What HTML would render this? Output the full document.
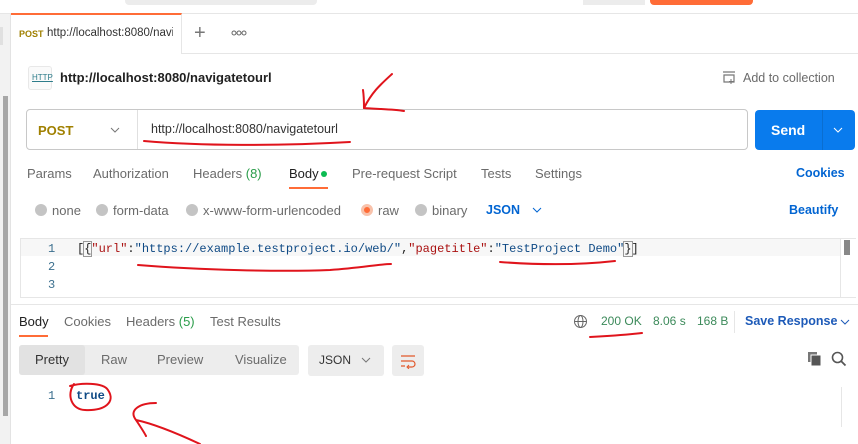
<!DOCTYPE html>
<html><head><style>
*{margin:0;padding:0;box-sizing:border-box}
body{width:858px;height:444px;overflow:hidden;background:#fff;font-family:"Liberation Sans",sans-serif;position:relative;color:#212121}
.a{position:absolute;white-space:nowrap}
.mono{font-family:"Liberation Mono",monospace;font-size:12px}
.g{color:#6b6b6b;font-size:13px}
.blue{color:#0265d2}
</style></head><body>
<div class="a" style="left:125px;top:0;width:192px;height:5px;background:#ececec;border-radius:0 0 4px 4px"></div>
<div class="a" style="left:583px;top:0;width:62px;height:5px;background:#ececec"></div>
<div class="a" style="left:650px;top:0;width:103px;height:5px;background:#ff6c37;border-radius:0 0 4px 4px"></div>
<div class="a" style="left:0;top:13px;width:858px;height:1px;background:#e6e6e6"></div>
<div class="a" style="left:0;top:53px;width:858px;height:1px;background:#e6e6e6"></div>
<div class="a" style="left:0;top:14px;width:11px;height:430px;background:#f2f2f2;border-right:1px solid #e3e3e3"></div>
<div class="a" style="left:0;top:27px;width:3px;height:18px;background:#e0e0e0"></div>
<div class="a" style="left:3px;top:96px;width:5px;height:320px;background:#a7a7a7"></div>
<div class="a" style="left:11px;top:13px;width:171px;height:41px;background:#fff;border-top:2px solid #ff6c37;border-right:1px solid #e6e6e6"></div>
<div class="a" style="left:19px;top:29px;font-size:9px;color:#a08000;font-weight:bold">POST</div>
<div class="a" style="left:47px;top:27px;font-size:11.5px;color:#333;width:126px;overflow:hidden">http://localhost:8080/navigatetourl</div>
<div class="a" style="left:194px;top:22px;font-size:20px;color:#777;font-weight:300">+</div>
<svg class="a" style="left:231px;top:30px" width="16" height="6"><circle cx="3" cy="3" r="2" fill="none" stroke="#666"/><circle cx="8" cy="3" r="2" fill="none" stroke="#666"/><circle cx="13" cy="3" r="2" fill="none" stroke="#666"/></svg>
<div class="a" style="left:28px;top:66px;width:24px;height:24px;border:1px solid #e8e8e8;border-radius:3px;background:#fafafa"></div>
<div class="a" style="left:32px;top:73px;font-size:8px;color:#2d7c8a;text-decoration:underline">HTTP</div>
<div class="a" style="left:60px;top:70px;font-size:13px;font-weight:bold;color:#212121">http://localhost:8080/navigatetourl</div>
<svg class="a" style="left:721px;top:70px" width="16" height="16"><path d="M2 2h12M3 5h10v7h-10z" fill="none" stroke="#777" stroke-width="1.2"/><path d="M10 9v5M8 11.5h5" stroke="#777"/></svg>
<div class="a" style="left:743px;top:71px;font-size:12.5px;color:#6b6b6b">Add to collection</div>
<div class="a" style="left:26px;top:109px;width:722px;height:41px;border:1px solid #c8c8c8;border-radius:4px"></div>
<div class="a" style="left:137px;top:110px;width:1px;height:39px;background:#e0e0e0"></div>
<div class="a" style="left:38px;top:123px;font-size:13px;font-weight:bold;color:#a08000">POST</div>
<svg class="a" style="left:110px;top:126px" width="10" height="8"><path d="M1 2l4 4 4-4" fill="none" stroke="#777"/></svg>
<div class="a" style="left:151px;top:122px;font-size:12.5px;color:#333">http://localhost:8080/navigatetourl</div>
<div class="a" style="left:755px;top:110px;width:100px;height:40px;background:#097bed;border-radius:4px"></div>
<div class="a" style="left:822px;top:110px;width:1px;height:40px;background:#0a6ed0"></div>
<div class="a" style="left:771px;top:122px;font-size:14px;font-weight:bold;color:#fff">Send</div>
<svg class="a" style="left:833px;top:126px" width="10" height="8"><path d="M1 2l4 4 4-4" fill="none" stroke="#fff"/></svg>
<div class="a g" style="left:27px;top:166px">Params</div>
<div class="a g" style="left:93px;top:166px">Authorization</div>
<div class="a g" style="left:193px;top:166px">Headers <span style="color:#2a9d4a">(8)</span></div>
<div class="a" style="left:289px;top:166px;font-size:13px;color:#212121">Body</div>
<div class="a" style="left:321px;top:171px;width:6px;height:6px;border-radius:50%;background:#0cbb52"></div>
<div class="a" style="left:289px;top:187px;width:39px;height:2px;background:#ff6c37"></div>
<div class="a g" style="left:352px;top:166px">Pre-request Script</div>
<div class="a g" style="left:481px;top:166px">Tests</div>
<div class="a g" style="left:535px;top:166px">Settings</div>
<div class="a blue" style="left:796px;top:166px;font-size:12.5px;font-weight:bold">Cookies</div>
<div class="a" style="left:35px;top:204px;width:12px;height:12px;border-radius:50%;background:#c4c4c4"></div>
<div class="a g" style="left:52px;top:203px">none</div>
<div class="a" style="left:96px;top:204px;width:12px;height:12px;border-radius:50%;background:#c4c4c4"></div>
<div class="a g" style="left:113px;top:203px">form-data</div>
<div class="a" style="left:186px;top:204px;width:12px;height:12px;border-radius:50%;background:#c4c4c4"></div>
<div class="a g" style="left:203px;top:203px">x-www-form-urlencoded</div>
<div class="a" style="left:361px;top:204px;width:12px;height:12px;border-radius:50%;background:#ff6c37;border:3px solid #f8c2ab"></div>
<div class="a g" style="left:378px;top:203px">raw</div>
<div class="a" style="left:415px;top:204px;width:12px;height:12px;border-radius:50%;background:#c4c4c4"></div>
<div class="a g" style="left:432px;top:203px">binary</div>
<div class="a blue" style="left:486px;top:203px;font-size:12.5px;font-weight:bold">JSON</div>
<svg class="a" style="left:532px;top:206px" width="10" height="8"><path d="M1 2l4 4 4-4" fill="none" stroke="#0265d2"/></svg>
<div class="a blue" style="left:789px;top:203px;font-size:12.5px;font-weight:bold">Beautify</div>
<div class="a" style="left:20px;top:238px;width:836px;height:60px;border:1px solid #e6e6e6;border-right:none"></div>
<div class="a" style="left:21px;top:239px;width:820px;height:17px;background:#f7f7f7"></div>
<div class="a" style="left:840px;top:239px;width:15px;height:58px;border-left:1px solid #e6e6e6"></div>
<div class="a" style="left:844px;top:240px;width:6px;height:15px;background:#888"></div>
<div class="a mono" style="left:48px;top:240px;color:#3b6f8e;line-height:18px">1<br>2<br>3</div>
<div class="a mono" style="left:77px;top:240px;line-height:18px"><span>[</span><span style="outline:1px solid #999">{</span><span style="color:#a11">"url"</span>:<span style="color:#0f4a85">"https://example.testproject.io/web/"</span>,<span style="color:#a11">"pagetitle"</span>:<span style="color:#0f4a85">"TestProject Demo"</span><span style="outline:1px solid #999">}</span>]</div>
<div class="a" style="left:11px;top:304px;width:847px;height:1px;background:#e6e6e6"></div>
<div class="a" style="left:19px;top:314px;font-size:13px;color:#212121">Body</div>
<div class="a" style="left:19px;top:335px;width:29px;height:2px;background:#ff6c37"></div>
<div class="a g" style="left:64px;top:314px">Cookies</div>
<div class="a g" style="left:126px;top:314px">Headers <span style="color:#2a9d4a">(5)</span></div>
<div class="a g" style="left:210px;top:314px">Test Results</div>
<svg class="a" style="left:573px;top:314px" width="15" height="15"><circle cx="7.5" cy="7.5" r="6" fill="none" stroke="#666"/><ellipse cx="7.5" cy="7.5" rx="2.5" ry="6" fill="none" stroke="#666"/><path d="M1.5 7.5h12" stroke="#666"/></svg>
<div class="a" style="left:601px;top:314px;font-size:12px;color:#3c8a5a">200 OK</div>
<div class="a" style="left:653px;top:314px;font-size:12px;color:#3c8a5a">8.06 s</div>
<div class="a" style="left:697px;top:314px;font-size:12px;color:#3c8a5a">168 B</div>
<div class="a" style="left:734px;top:311px;width:1px;height:22px;background:#e6e6e6"></div>
<div class="a blue" style="left:745px;top:314px;font-size:12.5px;font-weight:bold;color:#1d5ab8">Save Response</div>
<svg class="a" style="left:840px;top:318px" width="10" height="8"><path d="M1 2l4 4 4-4" fill="none" stroke="#1d5ab8"/></svg>
<div class="a" style="left:19px;top:345px;width:280px;height:30px;background:#ededed;border-radius:3px"></div>
<div class="a" style="left:19px;top:345px;width:66px;height:30px;background:#e2e2e2;border-radius:3px"></div>
<div class="a" style="left:35px;top:352px;font-size:13px;color:#333">Pretty</div>
<div class="a g" style="left:101px;top:352px">Raw</div>
<div class="a g" style="left:157px;top:352px">Preview</div>
<div class="a g" style="left:235px;top:352px">Visualize</div>
<div class="a" style="left:308px;top:345px;width:76px;height:31px;background:#ededed;border-radius:3px"></div>
<div class="a" style="left:319px;top:353px;font-size:12px;color:#333">JSON</div>
<svg class="a" style="left:361px;top:356px" width="10" height="8"><path d="M1 2l4 4 4-4" fill="none" stroke="#777"/></svg>
<div class="a" style="left:392px;top:345px;width:32px;height:31px;background:#ededed;border-radius:3px"></div>
<svg class="a" style="left:400px;top:353px" width="16" height="16"><path d="M1 3h14M1 8h11a3 3 0 0 1 0 6h-4M1 13h4" fill="none" stroke="#e2582b" stroke-width="1.2"/><path d="M9 12l-2 2 2 2" fill="none" stroke="#e2582b"/></svg>
<svg class="a" style="left:807px;top:351px" width="16" height="16"><rect x="1" y="1" width="9" height="10" fill="#777"/><rect x="4" y="4" width="10" height="11" fill="#555" stroke="#fff"/></svg>
<svg class="a" style="left:831px;top:351px" width="16" height="16"><circle cx="6.5" cy="6.5" r="5" fill="none" stroke="#555" stroke-width="1.6"/><path d="M10 10l4.5 4.5" stroke="#555" stroke-width="1.8"/></svg>
<div class="a" style="left:841px;top:387px;width:1px;height:40px;background:#e6e6e6"></div>
<div class="a mono" style="left:48px;top:389px;color:#3b6f8e">1</div>
<div class="a mono" style="left:76px;top:389px;color:#0f4a85;font-weight:bold">true</div>
<svg class="a" style="left:0;top:0" width="858" height="444">
<g fill="none" stroke="#e0141c" stroke-width="2" stroke-linecap="round">
<path d="M392 74 C380 85 372 92 364 108 M363 90 C364 97 364 103 364 108 C375 109 392 109 404 111"/>
<path d="M144 141 C200 146 280 146 350 142"/>
<path d="M138 265 C200 270 280 272 330 270 C360 268 380 264 391 264"/>
<path d="M500 262 C540 265 580 265 615 261"/>
<path d="M590 337 C610 336 625 335 642 333"/>
<path d="M74 384 C66 395 72 410 85 410 C105 411 116 402 108 390 C103 382 80 383 70 386"/>
<path d="M156 403 C140 403 128 410 136 420 C140 426 144 432 146 436 M136 420 C150 423 170 430 200 444"/>
</g></svg>
</body></html>
